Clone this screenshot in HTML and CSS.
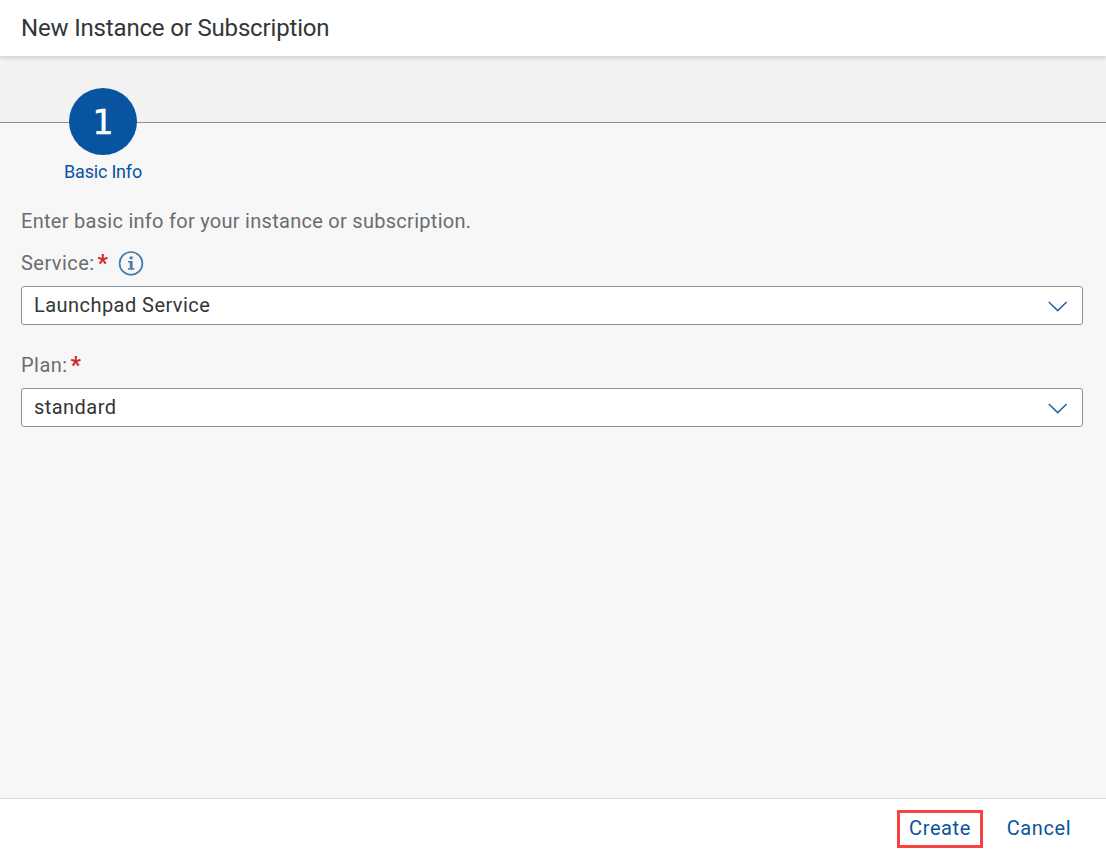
FILE: index.html
```html
<!DOCTYPE html>
<html lang="en">
<head>
<meta charset="utf-8">
<title>New Instance or Subscription</title>
<link rel="stylesheet" href="styles.css">
</head>
<body>
<div class="dialog">
  <header class="header"><h1 class="title">New Instance or Subscription</h1></header>
  <main class="content">
    <nav class="wizard">
      <div class="track"></div>
      <div class="step">
        <span class="circle">1</span>
        <span class="step-label">Basic Info</span>
      </div>
    </nav>
    <p class="intro">Enter basic info for your instance or subscription.</p>
    <div class="field">
      <div class="label"><span class="label-text">Service:</span><span class="required">*</span>
        <svg class="info" viewBox="0 0 26 26"><circle cx="13" cy="13.4" r="11.4"/><path class="info-mark" d="M11.6 6.4h3v2.8h-3zM10 11h4.6v7.2h1.8v1.6H9.9v-1.6h1.9v-5.6H10z"/></svg>
      </div>
      <div class="select"><span class="value">Launchpad Service</span><svg class="arrow" viewBox="0 0 20 11"><path d="M.8 1l8.9 8.6L18.6 1"/></svg></div>
    </div>
    <div class="field">
      <div class="label"><span class="label-text">Plan:</span><span class="required">*</span></div>
      <div class="select"><span class="value">standard</span><svg class="arrow" viewBox="0 0 20 11"><path d="M.8 1l8.9 8.6L18.6 1"/></svg></div>
    </div>
  </main>
  <footer class="footer">
    <button class="button create">Create</button>
    <button class="button cancel">Cancel</button>
  </footer>
</div>
</body>
</html>
```
FILE: styles.css
```css
* { box-sizing: border-box; }
body { margin: 0; font-family: Roboto, "Liberation Sans", sans-serif; font-size: 20px; color: #32363a; }
.dialog { height: 856px; display: flex; flex-direction: column; background: #f7f7f7; overflow: hidden; }
.header { position: relative; z-index: 1; height: 57px; flex: none; display: flex; align-items: center; padding: 0 21px; background: #fff; border-bottom: 1px solid #dcdcdc; box-shadow: 0 1px 4px rgba(0,0,0,.16); }
.title { margin: 0; font-size: 24px; font-weight: 400; line-height: 30px; letter-spacing: -.17px; white-space: nowrap; }
.content { flex: 1; display: flex; flex-direction: column; }
.wizard { height: 149px; flex: none; display: grid; }
.track, .step { grid-area: 1 / 1; }
.track { height: 66px; background: #f2f2f2; border-bottom: 1px solid #8491a3; }
.step { width: 206px; display: flex; flex-direction: column; align-items: center; padding-top: 31px; color: #0854a0; }
.circle { width: 68px; height: 67px; padding-top: 2px; border-radius: 50%; background: #0854a0; color: #fff; display: flex; align-items: center; justify-content: center; font-family: "DejaVu Sans", sans-serif; font-size: 33px; -webkit-text-stroke: .5px #fff; }
.step-label { margin-top: 6px; font-size: 18px; line-height: 22px; letter-spacing: -.2px; white-space: nowrap; }
.intro { margin: 3px 21px 0; line-height: 24px; color: #6a6d70; letter-spacing: .28px; white-space: nowrap; }
.field { margin: 17px 23px 0 21px; }
.field + .field { margin-top: 27px; }
.label { height: 26px; display: flex; align-items: center; color: #6a6d70; }
.label-text { line-height: 26px; letter-spacing: .45px; white-space: nowrap; }
.required { width: 13px; height: 26px; padding-top: 1px; margin-left: 3px; font-size: 23px; font-weight: 700; line-height: 26px; color: #d02b2b; }
.info { width: 26px; height: 26px; margin-left: 7px; fill: none; stroke: #427cac; stroke-width: 1.7; }
.info-mark { fill: #427cac; stroke: none; }
.select { height: 39px; margin-top: 10px; padding: 0 14px 2px 12px; border: 1px solid #89919a; border-radius: 3px; background: #fff; display: flex; align-items: center; justify-content: space-between; }
.value { letter-spacing: .45px; white-space: nowrap; }
.arrow { width: 20px; height: 11px; margin-top: 4px; fill: none; stroke: #1b65b1; stroke-width: 1.5; }
.footer { height: 58px; flex: none; display: flex; justify-content: flex-end; padding: 11px 23px 0 0; border-top: 1px solid #d9d9d9; background: #fff; }
.button { height: 38px; border: 0; padding: 0 0 2px; background: none; color: #0854a0; font: inherit; letter-spacing: .6px; white-space: nowrap; }
.create { width: 86px; border: 3px solid #fb4242; }
.cancel { width: 88px; margin-left: 12px; }
```
